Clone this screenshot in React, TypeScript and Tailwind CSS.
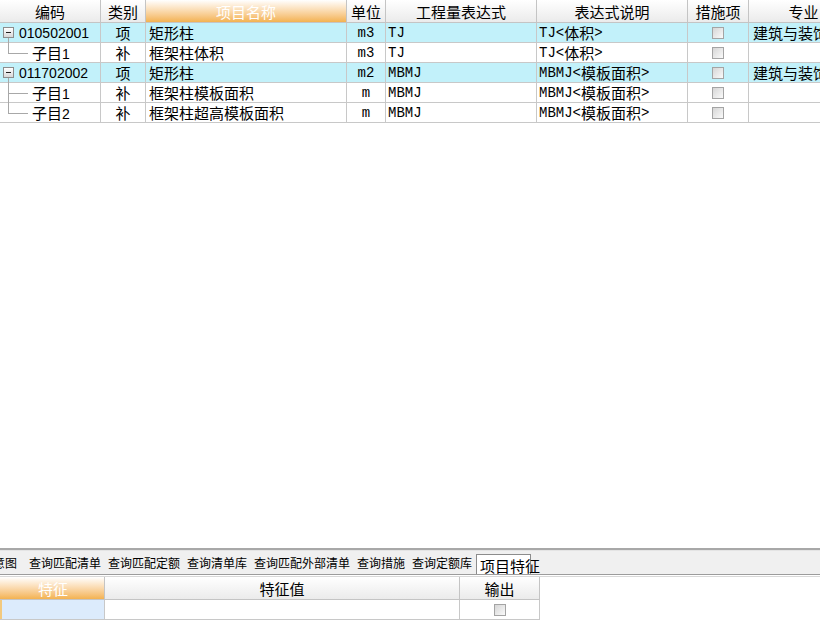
import React from 'react'

type Row = {
  code: string
  kind: string
  name: string
  unit: string
  expr: string
  desc: string
  major?: string
  parent?: boolean
  last?: boolean
  hl?: boolean
}

const rows: Row[] = [
  { code: '010502001', kind: '项', name: '矩形柱', unit: 'm3', expr: 'TJ', desc: 'TJ<体积>', major: '建筑与装饰工程', parent: true, hl: true },
  { code: '子目1', kind: '补', name: '框架柱体积', unit: 'm3', expr: 'TJ', desc: 'TJ<体积>', last: true },
  { code: '011702002', kind: '项', name: '矩形柱', unit: 'm2', expr: 'MBMJ', desc: 'MBMJ<模板面积>', major: '建筑与装饰工程', parent: true, hl: true },
  { code: '子目1', kind: '补', name: '框架柱模板面积', unit: 'm', expr: 'MBMJ', desc: 'MBMJ<模板面积>' },
  { code: '子目2', kind: '补', name: '框架柱超高模板面积', unit: 'm', expr: 'MBMJ', desc: 'MBMJ<模板面积>', last: true },
]

// 把 ASCII 段和中文段分开，ASCII 用等宽字体
function Mixed({ text, ascii }: { text: string; ascii: string }) {
  const parts = text.match(/[\x00-\x7f]+|[^\x00-\x7f]+/g) || []
  return (
    <>
      {parts.map((p, i) =>
        /^[\x00-\x7f]/.test(p) ? (
          <span key={i} className={ascii}>{p}</span>
        ) : (
          <span key={i}>{p}</span>
        )
      )}
    </>
  )
}

function CheckBox() {
  return <div className="w-[12px] h-[12px] border border-[#a4a4a4] bg-gradient-to-br from-[#d6d6d6] to-[#fafafa]" />
}

const head = 'h-[23px] flex items-center justify-center border-r border-b border-[#c4c4c4] bg-gradient-to-b from-[#ffffff] to-[#ebebeb] text-[15px] text-black shrink-0'
const orangeHead = 'bg-gradient-to-b from-[#fbdca0] to-[#f3b24f] text-white'
const cell = 'h-[20px] flex items-center border-r border-b border-[#c8c8c8] text-[15px] text-black shrink-0 whitespace-nowrap overflow-hidden'
const mono = "font-['Liberation_Mono',monospace] text-[14px]"
const sans = "font-['Liberation_Sans',sans-serif] text-[14px]"

function TreeCell({ r }: { r: Row }) {
  return (
    <div className={`${cell} w-[101px] relative overflow-visible`}>
      {r.parent ? (
        <>
          <span className="absolute left-[3px] top-[4px] w-[11px] h-[11px] border border-[#8c8c8c] bg-gradient-to-b from-[#ffffff] to-[#d8d8d8] flex items-center justify-center">
            <span className="w-[5px] h-px bg-[#202020]" />
          </span>
          <span className="absolute left-[8px] top-[15px] bottom-[-1px] w-px bg-[#a8a8a8]" />
          <span className={`pl-[19px] ${sans}`}>{r.code}</span>
        </>
      ) : (
        <>
          <span className={`absolute left-[8px] top-[-1px] w-px bg-[#a8a8a8] ${r.last ? 'h-[11px]' : 'bottom-[-1px]'}`} />
          <span className="absolute left-[8px] top-[10px] w-[20px] h-px bg-[#a8a8a8]" />
          <span className="pl-[32px]">
            <Mixed text={r.code} ascii={sans} />
          </span>
        </>
      )}
    </div>
  )
}

export default function App() {
  return (
    <div className="w-[820px] h-[639px] overflow-hidden bg-white flex flex-col font-['Noto_Sans_CJK_SC',sans-serif] leading-none">
      {/* 上方清单表格 */}
      <div className="flex-1 overflow-hidden">
        <div className="flex w-[880px]">
          <div className={`${head} w-[101px]`}>编码</div>
          <div className={`${head} w-[45px]`}>类别</div>
          <div className={`${head} w-[201px] ${orangeHead}`}>项目名称</div>
          <div className={`${head} w-[39px]`}>单位</div>
          <div className={`${head} w-[151px]`}>工程量表达式</div>
          <div className={`${head} w-[151px]`}>表达式说明</div>
          <div className={`${head} w-[61px]`}>措施项</div>
          <div className={`${head} w-[110px]`}>专业</div>
        </div>
        {rows.map((r, i) => (
          <div key={i} className={`flex w-[880px] ${r.hl ? 'bg-[#c2f1fa]' : 'bg-white'}`}>
            <TreeCell r={r} />
            <div className={`${cell} w-[45px] justify-center`}>{r.kind}</div>
            <div className={`${cell} w-[201px] pl-[3px]`}>{r.name}</div>
            <div className={`${cell} w-[39px] justify-center`}>
              <Mixed text={r.unit} ascii={mono} />
            </div>
            <div className={`${cell} w-[151px] pl-[2px]`}>
              <Mixed text={r.expr} ascii={mono} />
            </div>
            <div className={`${cell} w-[151px] pl-[2px]`}>
              <Mixed text={r.desc} ascii={mono} />
            </div>
            <div className={`${cell} w-[61px] justify-center`}>
              <CheckBox />
            </div>
            <div className={`${cell} w-[110px] pl-[4px]`}>{r.major}</div>
          </div>
        ))}
      </div>

      {/* 下方页签 */}
      <div className="h-[91px] shrink-0 flex flex-col">
        <div className="h-[2px] bg-[#a8a8a8]" />
        <div className="h-px bg-[#e4e4e4]" />
        <div className="h-[23px] bg-[#f0f0f0] flex items-end text-[12px] text-black whitespace-nowrap overflow-visible">
          <span className="ml-[-19px] mr-[12px] pb-[5px]">示意图</span>
          <span className="mr-[7px] pb-[5px]">查询匹配清单</span>
          <span className="mr-[7px] pb-[5px]">查询匹配定额</span>
          <span className="mr-[7px] pb-[5px]">查询清单库</span>
          <span className="mr-[7px] pb-[5px]">查询匹配外部清单</span>
          <span className="mr-[7px] pb-[5px]">查询措施</span>
          <span className="mr-[4px] pb-[5px]">查询定额库</span>
          <span className="w-[55px] h-[20px] border-l border-t border-r border-[#8c8c8c] bg-white text-[15px] pl-[3px] pt-[3px] overflow-visible">项目特征</span>
        </div>
        <div className="h-px bg-[#9c9c9c]" />
        <div className="h-px bg-white" />
        <div className="h-px bg-[#d8d8d8]" />

        {/* 项目特征表 */}
        <div className="flex">
          <div className={`${head} w-[2px] ${orangeHead} border-r-0 h-[20px]`} />
          <div className={`${head} w-[103px] ${orangeHead} h-[20px]`}>特征</div>
          <div className={`${head} w-[355px] h-[20px]`}>特征值</div>
          <div className={`${head} w-[80px] h-[20px]`}>输出</div>
        </div>
        <div className="flex">
          <div className="w-[2px] h-[20px] bg-[#f3c97e] border-b border-[#c8c8c8]" />
          <div className={`${cell} w-[103px] bg-[#dcebfc]`} />
          <div className={`${cell} w-[355px]`} />
          <div className={`${cell} w-[80px] justify-center`}>
            <CheckBox />
          </div>
        </div>
      </div>
    </div>
  )
}
